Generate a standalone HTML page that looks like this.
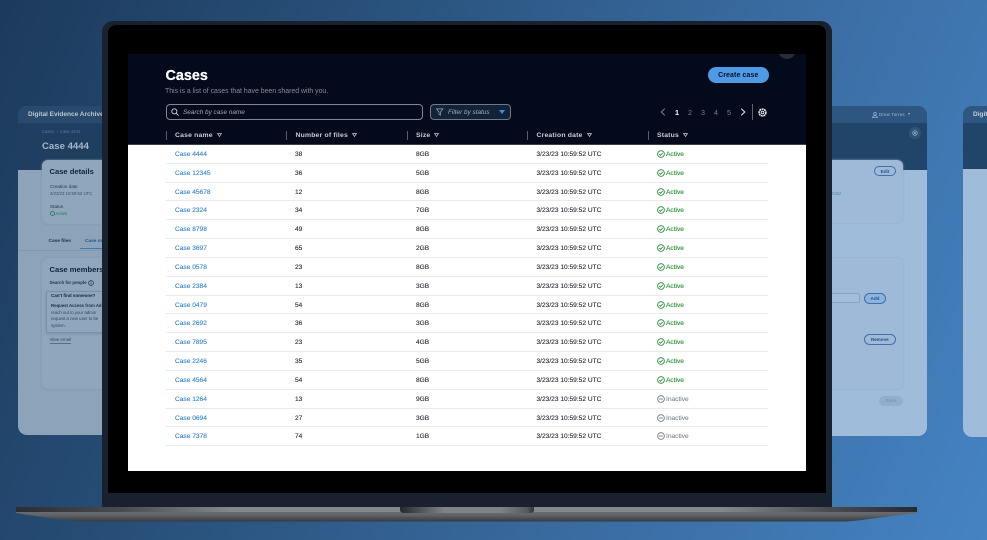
<!DOCTYPE html>
<html lang="en"><head><meta charset="utf-8"><title>Cases</title>
<style>
*{box-sizing:border-box}
html,body{margin:0;padding:0;width:987px;height:540px;overflow:hidden}
body{position:relative;background:linear-gradient(112deg,#1c3a5b 0%,#28507a 30%,#38699d 62%,#4583c3 100%);font-family:"Liberation Sans",sans-serif}
.a,.t{position:absolute}
.t{white-space:nowrap;line-height:1}
.blur{filter:blur(.35px)}
.r{position:absolute;left:166px;width:602px;height:18.83px;border-bottom:1px solid #e8eaec;font-size:6.6px;color:#22272e;filter:blur(.2px)}
.r span{position:absolute;top:7px;line-height:1;white-space:nowrap;-webkit-text-stroke:.1px}
.r .n{left:9px;color:#2f7fca}.r .f{left:129px}.r .s{left:250px}.r .d{left:370.5px}
.r svg{position:absolute;left:491px;top:5px}
.r .st{left:500px}.g{color:#1d8a2e}.i{color:#7f8790}
.h{position:absolute;top:133px;font-size:6.8px;font-weight:700;color:#c9ced6;line-height:1;white-space:nowrap;letter-spacing:.2px;filter:blur(.15px)}
.h svg{margin-left:4px;vertical-align:0}
.sep{position:absolute;top:130.5px;width:1px;height:9px;background:#565c69}
.pg{position:absolute;top:108.5px;font-size:7.2px;color:#7b818d;line-height:1}
.btn{position:absolute;border:1px solid #3f70a8;border-radius:6px;font-size:4.6px;font-weight:700;color:#215489;display:flex;align-items:center;justify-content:center}
</style></head><body>
<svg width="0" height="0" style="position:absolute"><defs>
<symbol id="ok" viewBox="0 0 10 10"><circle cx="5" cy="5" r="4.2" fill="none" stroke="#1d8a2e" stroke-width="1.1"/><path d="M2.9 5.100L4.400 6.600L7.200 3.600" fill="none" stroke="#1d8a2e" stroke-width="1.100"/></symbol>
<symbol id="no" viewBox="0 0 10 10"><circle cx="5" cy="5" r="4.2" fill="none" stroke="#69717a" stroke-width="1.1"/><path d="M2.700 5H7.300" stroke="#69717a" stroke-width="1.100"/></symbol>
<symbol id="tri" viewBox="0 0 6 5"><path d="M.6 .6H5.400L3 4.400Z" fill="none" stroke="#c9ced6" stroke-width=".9"/></symbol>
</defs></svg>

<!-- left background card -->
<div class="a" style="left:18px;top:106px;width:110px;height:329px;background:#8ca3ba;border-radius:9px 0 0 9px;overflow:hidden">
  <div class="a" style="left:0;top:0;width:110px;height:64px;background:#1f3e60"></div>
  <div class="a" style="left:0;top:0;width:110px;height:17px;background:#294a6d"></div>
</div>
<div class="a" style="left:42px;top:160px;width:70px;height:64px;background:#8fa6bd;border-radius:6px 0 0 6px;box-shadow:0 0 2px #7a91a8"></div>
<div class="a" style="left:18px;top:250px;width:84px;height:1px;background:#8298ae"></div>
<div class="a" style="left:42px;top:258px;width:70px;height:131px;background:#8fa6bd;border-radius:6px 0 0 6px;box-shadow:0 0 2px #7a91a8"></div>
<div class="a" style="left:46px;top:291px;width:62px;height:42px;background:#8fa6bd;border:1px solid #7b91a7;border-radius:2px;box-shadow:0 1px 2px #7b91a7"></div>
<div class="blur">
<div class="t" style="left:28px;top:112px;font-size:6.5px;font-weight:700;color:#b8c7d6">Digital Evidence Archive</div>
<div class="t" style="left:42px;top:130px;font-size:4.2px;color:#5c7896">Cases &nbsp;›&nbsp; Case 4444</div>
<div class="t" style="left:42px;top:141.500px;font-size:9.6px;font-weight:700;color:#a4b9cd">Case 4444</div>
<div class="t" style="left:49.5px;top:168px;font-size:7.6px;font-weight:700;color:#0f243c">Case details</div>
<div class="t" style="left:50px;top:184.500px;font-size:4.6px;color:#1f344a">Creation date</div>
<div class="t" style="left:50px;top:192px;font-size:4.300px;color:#3c5066">3/23/23 10:59:52 UTC</div>
<div class="t" style="left:50px;top:204.500px;font-size:4.600px;color:#1f344a">Status</div>
<svg class="a" style="left:49.500px;top:210.500px" width="5" height="5" viewBox="0 0 10 10"><circle cx="5" cy="5" r="4" fill="none" stroke="#1d6d40" stroke-width="1.500"/></svg>
<div class="t" style="left:55.500px;top:212px;font-size:4.300px;color:#2a7350">Active</div>
<div class="t" style="left:48.500px;top:239.500px;font-size:4.800px;font-weight:700;color:#1f344a">Case files</div>
<div class="t" style="left:85px;top:239.500px;font-size:4.800px;font-weight:700;color:#235a90">Case members</div>
<div class="a" style="left:80px;top:248px;width:24px;height:1px;background:#3f79b5"></div>
<div class="t" style="left:49.500px;top:265.500px;font-size:7.600px;font-weight:700;color:#0f243c">Case members</div>
<div class="t" style="left:49.500px;top:281px;font-size:4.400px;font-weight:700;color:#1f344a">Search for people</div>
<svg class="a" style="left:87.500px;top:280px" width="6" height="6" viewBox="0 0 10 10"><circle cx="5" cy="5" r="4" fill="none" stroke="#1f344a" stroke-width="1.200"/><path d="M5 4.500v3M5 2.600v1" stroke="#1f344a" stroke-width="1.200"/></svg>
<div class="t" style="left:51px;top:294px;font-size:4.500px;font-weight:700;color:#0f243c">Can't find someone?</div>
<div class="t" style="left:51px;top:304px;font-size:4.300px;font-weight:700;color:#1a2e44">Request Access from Ad</div>
<div class="t" style="left:51px;top:311px;font-size:4.300px;color:#33475c">reach out to your admin</div>
<div class="t" style="left:51px;top:317px;font-size:4.300px;color:#33475c">request a new user to be</div>
<div class="t" style="left:51px;top:324px;font-size:4.300px;color:#33475c">system.</div>
<div class="t" style="left:49.500px;top:338px;font-size:4.500px;color:#33475c;border-bottom:.5px solid #5a6f85">View email</div>
</div>

<!-- right background card -->
<div class="a" style="left:800px;top:106px;width:127px;height:330px;background:#a0bcdb;border-radius:0 9px 9px 0;overflow:hidden">
  <div class="a" style="left:0;top:0;width:127px;height:64px;background:#214569"></div>
  <div class="a" style="left:0;top:0;width:127px;height:17px;background:#2d5681"></div>
</div>
<div class="a" style="left:800px;top:160px;width:103px;height:63px;background:#9fbad9;border-radius:0 6px 6px 0;box-shadow:0 0 2px #8aa6c6"></div>
<div class="a" style="left:800px;top:258px;width:103px;height:131px;background:#9fbad9;border-radius:0 6px 6px 0;box-shadow:0 0 2px #8aa6c6"></div>
<div class="blur">
<svg class="a" style="left:871.500px;top:111.500px" width="6" height="6" viewBox="0 0 10 10"><circle cx="5" cy="3" r="2.200" fill="none" stroke="#a8bfd6"/><path d="M1 9.500c0-2.500 1.500-3.300 4-3.300s4 .8 4 3.300z" fill="none" stroke="#a8bfd6"/></svg>
<div class="t" style="left:879px;top:113px;font-size:4.400px;color:#a8bfd6;letter-spacing:.2px">Drew Torres</div>
<div class="a" style="left:908px;top:113px;width:0;height:0;border-left:1.800px solid transparent;border-right:1.800px solid transparent;border-top:2.600px solid #a8bfd6"></div>
<div class="a" style="left:909px;top:127px;width:12px;height:12px;border-radius:50%;background:#2f5478"></div>
<svg class="a" style="left:912px;top:130px" width="6" height="6" viewBox="0 0 10 10"><circle cx="5" cy="5" r="3.800" fill="none" stroke="#9fb6cd" stroke-width="1.200"/><circle cx="5" cy="5" r="1.400" fill="none" stroke="#9fb6cd"/></svg>
<div class="btn" style="left:874px;top:166px;width:22px;height:10px">Edit</div>
<div class="t" style="left:832px;top:192px;font-size:4.400px;color:#4a7db0">CSV</div>
<div class="a" style="left:832px;top:293px;width:28px;height:10px;border:1px solid #86a2c2;border-left:0;border-radius:0 2px 2px 0;background:#a3bedc"></div>
<div class="btn" style="left:864px;top:293px;width:22px;height:10.500px;background:#8db3de">Add</div>
<div class="btn" style="left:864px;top:334px;width:31.500px;height:10.500px">Remove</div>
<div class="a" style="left:879px;top:396px;width:24px;height:9.500px;border-radius:5px;background:#93aecd;font-size:4.600px;font-weight:700;color:#7a96b6;text-align:center;line-height:9.500px">Save</div>
</div>

<!-- far right card -->
<div class="a" style="left:963px;top:106px;width:24px;height:331px;background:#a0bcdb;border-radius:9px 0 0 9px;overflow:hidden">
  <div class="a" style="left:0;top:0;width:24px;height:63px;background:#214569"></div>
  <div class="a" style="left:0;top:0;width:24px;height:17px;background:#2d5681"></div>
  <div class="t blur" style="left:10px;top:6px;font-size:6.500px;font-weight:700;color:#c3d2e1">Digital</div>
</div>

<!-- laptop -->
<div class="a" style="left:102px;top:21px;width:730px;height:487px;background:#1a212e;border-radius:11px 11px 0 0"></div>
<div class="a" style="left:108px;top:25px;width:718px;height:468px;background:#000;border-radius:8px 8px 0 0"></div>
<div class="a" style="left:127.500px;top:54px;width:678.500px;height:90.500px;background:#020a1c;overflow:hidden">
  <div class="a" style="left:650px;top:-14px;width:18px;height:19px;border-radius:50%;background:#282d3a"></div>
</div>
<div class="a" style="left:127.500px;top:144px;width:678.500px;height:326.500px;background:#fff;border-top:1px solid #3a3f48"></div>

<svg class="a" style="left:0;top:505px" width="987" height="20" viewBox="0 0 987 20">
<defs>
<linearGradient id="v" x1="0" y1="0" x2="0" y2="1"><stop offset="0" stop-color="#74777c"/><stop offset=".55" stop-color="#616468"/><stop offset="1" stop-color="#36393e"/></linearGradient>
<linearGradient id="h" x1="0" y1="0" x2="1" y2="0"><stop offset="0" stop-color="#2a2d33"/><stop offset=".12" stop-color="#4a4c50"/><stop offset=".24" stop-color="#85898e"/><stop offset=".78" stop-color="#85898e"/><stop offset=".9" stop-color="#4a4c50"/><stop offset="1" stop-color="#262a32"/></linearGradient>
<linearGradient id="n" x1="0" y1="0" x2="1" y2="0"><stop offset="0" stop-color="#26282c"/><stop offset=".2" stop-color="#5c5f63"/><stop offset=".33" stop-color="#7f8287"/><stop offset=".75" stop-color="#7f8287"/><stop offset=".95" stop-color="#55585c"/><stop offset="1" stop-color="#303338"/></linearGradient>
</defs>
<path d="M16 2H917V8C880 12 860 16 845 16.500H85C60 15 40 12 16 8Z" fill="url(#v)"/>
<rect x="16" y="2" width="901" height="5" fill="url(#h)"/>
<path d="M400 2H534V5Q534 8 530 8H405Q400 8 400 5Z" fill="url(#n)"/>
</svg>

<!-- screen header -->
<div class="t" style="left:165.500px;top:69px;font-size:14.400px;font-weight:700;color:#fff;-webkit-text-stroke:.25px #fff">Cases</div>
<div class="t" style="left:165px;top:89px;font-size:6.900px;color:#858b97">This is a list of cases that have been shared with you.</div>
<div class="a" style="left:708px;top:67px;width:60.500px;height:16px;border-radius:8px;background:#4e9ae4;color:#03102a;font-size:6.900px;font-weight:700;text-align:center;line-height:18px;letter-spacing:.15px;overflow:hidden">Create case</div>

<div class="a" style="left:165.500px;top:104px;width:257px;height:16px;border:1px solid #7f8694;border-radius:4px;background:#020a1c"></div>
<svg class="a" style="left:171px;top:108px" width="8" height="8" viewBox="0 0 10 10"><circle cx="4.200" cy="4.200" r="3.200" fill="none" stroke="#d5d9e0" stroke-width="1.100"/><path d="M6.600 6.600L9.500 9.500" stroke="#d5d9e0" stroke-width="1.100"/></svg>
<div class="t" style="left:183px;top:110px;font-size:6.400px;font-style:italic;color:#a4a9b3">Search by case name</div>

<div class="a" style="left:430px;top:104px;width:81px;height:16px;border:1px solid #6d7888;border-radius:4px;background:#122338"></div>
<svg class="a" style="left:436px;top:108px" width="7.500" height="8" viewBox="0 0 10 10"><path d="M.7 .8H9.300L6 5V9.200L4 8V5Z" fill="none" stroke="#a4aab5" stroke-width=".9"/></svg>
<div class="t" style="left:448px;top:110px;font-size:6.400px;font-style:italic;color:#a4a9b3">Filter by status</div>
<div class="a" style="left:498.500px;top:110px;width:0;height:0;border-left:3px solid transparent;border-right:3px solid transparent;border-top:4.500px solid #3f8fdc"></div>

<svg class="a" style="left:660px;top:108px" width="6" height="8" viewBox="0 0 6 8"><path d="M4.800 .6L1.200 4L4.800 7.400" fill="none" stroke="#7b818d" stroke-width="1"/></svg>
<div class="pg" style="left:675px;color:#fff;font-weight:700">1</div>
<div class="pg" style="left:688px">2</div>
<div class="pg" style="left:701px">3</div>
<div class="pg" style="left:714px">4</div>
<div class="pg" style="left:727px">5</div>
<svg class="a" style="left:740px;top:108px" width="6" height="8" viewBox="0 0 6 8"><path d="M1.200 .6L4.800 4L1.200 7.400" fill="none" stroke="#e2e5ea" stroke-width="1"/></svg>
<div class="a" style="left:752px;top:104px;width:1px;height:16px;background:#5d6370"></div>
<svg class="a" style="left:757.500px;top:107.500px" width="9" height="9" viewBox="0 0 10 10"><circle cx="5" cy="5" r="3.800" fill="none" stroke="#eef0f3" stroke-width="1.700" stroke-dasharray="2.200 .6"/><circle cx="5" cy="5" r="1.500" fill="none" stroke="#eef0f3" stroke-width="1"/></svg>

<div class="sep" style="left:165.500px"></div><div class="h" style="left:175px">Case name<svg width="5" height="4"><use href="#tri"/></svg></div>
<div class="sep" style="left:286px"></div><div class="h" style="left:295.500px">Number of files<svg width="5" height="4"><use href="#tri"/></svg></div>
<div class="sep" style="left:406.500px"></div><div class="h" style="left:416px">Size<svg width="5" height="4"><use href="#tri"/></svg></div>
<div class="sep" style="left:527px"></div><div class="h" style="left:536.500px">Creation date<svg width="5" height="4"><use href="#tri"/></svg></div>
<div class="sep" style="left:647.500px"></div><div class="h" style="left:657px">Status<svg width="5" height="4"><use href="#tri"/></svg></div>

<!-- rows -->
<div class="r" style="top:145px"><span class="n">Case 4444</span><span class="f">38</span><span class="s">8GB</span><span class="d">3/23/23 10:59:52 UTC</span><svg width="8" height="8"><use href="#ok"/></svg><span class="st g">Active</span></div>
<div class="r" style="top:163.830px"><span class="n">Case 12345</span><span class="f">36</span><span class="s">5GB</span><span class="d">3/23/23 10:59:52 UTC</span><svg width="8" height="8"><use href="#ok"/></svg><span class="st g">Active</span></div>
<div class="r" style="top:182.660px"><span class="n">Case 45678</span><span class="f">12</span><span class="s">8GB</span><span class="d">3/23/23 10:59:52 UTC</span><svg width="8" height="8"><use href="#ok"/></svg><span class="st g">Active</span></div>
<div class="r" style="top:201.490px"><span class="n">Case 2324</span><span class="f">34</span><span class="s">7GB</span><span class="d">3/23/23 10:59:52 UTC</span><svg width="8" height="8"><use href="#ok"/></svg><span class="st g">Active</span></div>
<div class="r" style="top:220.320px"><span class="n">Case 8798</span><span class="f">49</span><span class="s">8GB</span><span class="d">3/23/23 10:59:52 UTC</span><svg width="8" height="8"><use href="#ok"/></svg><span class="st g">Active</span></div>
<div class="r" style="top:239.150px"><span class="n">Case 3697</span><span class="f">65</span><span class="s">2GB</span><span class="d">3/23/23 10:59:52 UTC</span><svg width="8" height="8"><use href="#ok"/></svg><span class="st g">Active</span></div>
<div class="r" style="top:257.980px"><span class="n">Case 0578</span><span class="f">23</span><span class="s">8GB</span><span class="d">3/23/23 10:59:52 UTC</span><svg width="8" height="8"><use href="#ok"/></svg><span class="st g">Active</span></div>
<div class="r" style="top:276.810px"><span class="n">Case 2384</span><span class="f">13</span><span class="s">3GB</span><span class="d">3/23/23 10:59:52 UTC</span><svg width="8" height="8"><use href="#ok"/></svg><span class="st g">Active</span></div>
<div class="r" style="top:295.640px"><span class="n">Case 0479</span><span class="f">54</span><span class="s">8GB</span><span class="d">3/23/23 10:59:52 UTC</span><svg width="8" height="8"><use href="#ok"/></svg><span class="st g">Active</span></div>
<div class="r" style="top:314.470px"><span class="n">Case 2692</span><span class="f">36</span><span class="s">3GB</span><span class="d">3/23/23 10:59:52 UTC</span><svg width="8" height="8"><use href="#ok"/></svg><span class="st g">Active</span></div>
<div class="r" style="top:333.300px"><span class="n">Case 7895</span><span class="f">23</span><span class="s">4GB</span><span class="d">3/23/23 10:59:52 UTC</span><svg width="8" height="8"><use href="#ok"/></svg><span class="st g">Active</span></div>
<div class="r" style="top:352.130px"><span class="n">Case 2246</span><span class="f">35</span><span class="s">5GB</span><span class="d">3/23/23 10:59:52 UTC</span><svg width="8" height="8"><use href="#ok"/></svg><span class="st g">Active</span></div>
<div class="r" style="top:370.960px"><span class="n">Case 4564</span><span class="f">54</span><span class="s">8GB</span><span class="d">3/23/23 10:59:52 UTC</span><svg width="8" height="8"><use href="#ok"/></svg><span class="st g">Active</span></div>
<div class="r" style="top:389.790px"><span class="n">Case 1264</span><span class="f">13</span><span class="s">9GB</span><span class="d">3/23/23 10:59:52 UTC</span><svg width="8" height="8"><use href="#no"/></svg><span class="st i">Inactive</span></div>
<div class="r" style="top:408.620px"><span class="n">Case 0694</span><span class="f">27</span><span class="s">3GB</span><span class="d">3/23/23 10:59:52 UTC</span><svg width="8" height="8"><use href="#no"/></svg><span class="st i">Inactive</span></div>
<div class="r" style="top:427.450px"><span class="n">Case 7378</span><span class="f">74</span><span class="s">1GB</span><span class="d">3/23/23 10:59:52 UTC</span><svg width="8" height="8"><use href="#no"/></svg><span class="st i">Inactive</span></div>

</body></html>
